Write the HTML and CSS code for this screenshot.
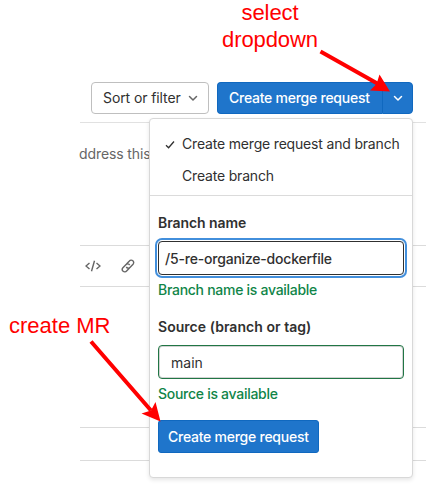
FILE: index.html
```html
<!DOCTYPE html>
<html lang="en">
<head>
<meta charset="utf-8">
<title>Create merge request</title>
<link rel="stylesheet" href="styles.css">
</head>
<body>
<main class="page">
  <header class="toolbar">
    <button class="btn sort"><span class="sort-label">Sort or filter</span>
      <svg class="chevron" viewBox="0 0 10 7"><path d="M1.500 1.500 5 5l3.500-3.500"/></svg>
    </button>
    <div class="split">
      <button class="split-main"><span class="action-label">Create merge request</span></button>
      <button class="split-toggle" aria-label="Options"><svg class="chevron" viewBox="0 0 10 7"><path d="M1.500 1.500 5 5l3.500-3.500"/></svg></button>
      <section class="dropdown">
        <ul class="menu">
          <li><svg class="check" viewBox="0 0 10 9"><path d="M1 5.200 3.600 7.700 9 1.500"/></svg><span class="item-long">Create merge request and branch</span></li>
          <li><span class="item-short">Create branch</span></li>
        </ul>
        <form class="form">
          <label class="label branch-label" for="branch">Branch name</label>
          <div class="field focused" id="branch"><span class="branch-value">/5-re-organize-dockerfile</span></div>
          <p class="hint branch-hint">Branch name is available</p>
          <label class="label source-label" for="source">Source (branch or tag)</label>
          <div class="field valid" id="source"><span class="source-value">main</span></div>
          <p class="hint source-hint">Source is available</p>
          <button class="submit" type="button"><span class="action-label">Create merge request</span></button>
        </form>
      </section>
    </div>
  </header>
  <div class="content">
    <p class="description">ddress this</p>
    <div class="editor-tools">
      <svg class="code" viewBox="0 0 16 12"><path d="M4.500 3 1 6l3.500 3M11.500 3 15 6l-3.500 3M9.500.8l-3 10.400"/></svg>
      <svg class="link" viewBox="0 0 16 16"><path d="m6.300 5.700 3.300-3.500a2.600 2.600 0 0 1 4.200 3.700l-3.600 3.800a2.500 2.500 0 0 1-4.100-.7M9.700 10.300l-3.300 3.500a2.600 2.600 0 0 1-4.200-3.700l3.600-3.800a2.500 2.500 0 0 1 4.100.7"/></svg>
    </div>
    <div class="editor-body"></div>
    <div class="row"></div>
  </div>
</main>
<p class="note note-select">select<br>dropdown</p>
<p class="note note-create">create MR</p>
<svg class="arrows" viewBox="0 0 426 490">
  <path class="shaft" d="M320.500 51.500 380 85M91 341.500l60 69"/>
  <path class="head" d="M390 91.500 370 90.500 376.500 84 379.500 74.500ZM160.500 421.500 141.500 413.500 151 410.500 155.500 402Z"/>
</svg>
</body>
</html>
```
FILE: styles.css
```css
* { box-sizing: border-box; }
body {
  position: relative;
  width: 426px;
  height: 490px;
  margin: 0;
  overflow: hidden;
  background: #fff;
  color: #303030;
  font: 14px/20px Inter, "Liberation Sans", sans-serif;
}
p, ul { margin: 0; padding: 0; }
button { margin: 0; font: inherit; }
svg { display: block; fill: none; stroke: currentColor; flex: none; }
span { white-space: nowrap; }

.page { padding-left: 80px; }
.toolbar {
  display: flex;
  gap: 8px;
  height: 123px;
  padding: 82px 0 0 11px;
  border-bottom: 1px solid #e1e1e1;
}
.btn {
  display: flex;
  align-items: center;
  justify-content: space-between;
  width: 118px;
  height: 32px;
  padding: 0 10px 0 11px;
  border: 1px solid #bfbfbf;
  border-radius: 4px;
  background: #fff;
  color: #303030;
}
.sort-label { letter-spacing: -.1px; }
.chevron { width: 10px; height: 7px; stroke-width: 1.5; stroke-linecap: round; stroke-linejoin: round; }
.sort .chevron { color: #666; }
.split { position: relative; display: flex; width: 196px; height: 32px; }
.split-main, .split-toggle, .submit {
  display: flex;
  align-items: center;
  border: 1px solid #1068bf;
  background: #1f75cb;
  color: #fff;
  font-weight: 500;
}
.action-label { letter-spacing: -.25px; }
.split-main { width: 165px; padding: 0 11px; border-radius: 4px 0 0 4px; border-right: 0; }
.split-toggle { width: 31px; justify-content: center; padding: 0; border-radius: 0 4px 4px 0; }

.dropdown {
  position: absolute;
  z-index: 1;
  top: 36px;
  right: 0;
  width: 264px;
  height: 360px;
  border: 1px solid #d8d8d8;
  border-radius: 4px;
  background: #fff;
  box-shadow: 0 2px 4px rgba(0, 0, 0, .1);
}
.menu { height: 77px; padding-top: 9px; border-bottom: 1px solid #dbdbdb; list-style: none; }
.menu li { position: relative; display: flex; align-items: center; height: 32px; padding-left: 32px; }
.item-long, .item-short { letter-spacing: -.18px; }
.check { position: absolute; left: 15px; top: 12px; width: 10px; height: 9px; stroke-width: 1.3; }
.form { display: flex; flex-direction: column; align-items: flex-start; padding: 17px 8px 0; }
.label { font-weight: 600; white-space: nowrap; }
.branch-label { letter-spacing: -.08px; }
.field {
  display: flex;
  align-items: center;
  width: 246px;
  height: 34px;
  margin-top: 8px;
  border: 1px solid #303030;
  border-radius: 4px;
}
.focused { padding-left: 6px; box-shadow: 0 0 0 1px #fff, 0 0 0 3px #428fdc; }
.branch-value { position: relative; top: 1px; font-weight: 500; letter-spacing: -.2px; }
.valid { padding-left: 12px; border-color: #217645; box-shadow: inset 0 0 0 1px rgba(80, 80, 80, .25); }
.source-value { position: relative; top: 1px; }
.hint { margin-top: 5px; color: #108548; font-weight: 500; letter-spacing: -.28px; white-space: nowrap; }
.source-label { margin-top: 17px; letter-spacing: .04px; }
.submit { width: 161px; height: 33px; margin-top: 16px; padding: 0 9px; border-radius: 3px; }

.content { color: #666; }
.description { height: 122px; padding-top: 21px; margin-left: -1px; letter-spacing: -.1px; }
.editor-tools {
  display: flex;
  align-items: center;
  gap: 20px;
  height: 42px;
  padding-left: 5px;
  border: solid #dbdbdb;
  border-width: 1px 0;
}
.code { width: 16px; height: 12px; stroke-width: 1.4; }
.link { width: 14px; height: 14px; stroke-width: 1.6; }
.editor-body { height: 141px; border-bottom: 1px solid #dbdbdb; }
.row { height: 33px; border-bottom: 1px solid #dbdbdb; }

.note {
  position: absolute;
  z-index: 2;
  color: #f00;
  font: 22px/27px "Liberation Sans", Arial, sans-serif;
  text-align: center;
  white-space: nowrap;
}
.note-select { left: 221px; top: -1px; width: 98px; letter-spacing: -.1px; }
.note-create { left: 9px; top: 312px; }
.arrows { position: absolute; z-index: 3; left: 0; top: 0; width: 426px; height: 490px; pointer-events: none; }
.shaft { stroke: #f00; stroke-width: 4; }
.head { fill: #f00; stroke: none; }
```
